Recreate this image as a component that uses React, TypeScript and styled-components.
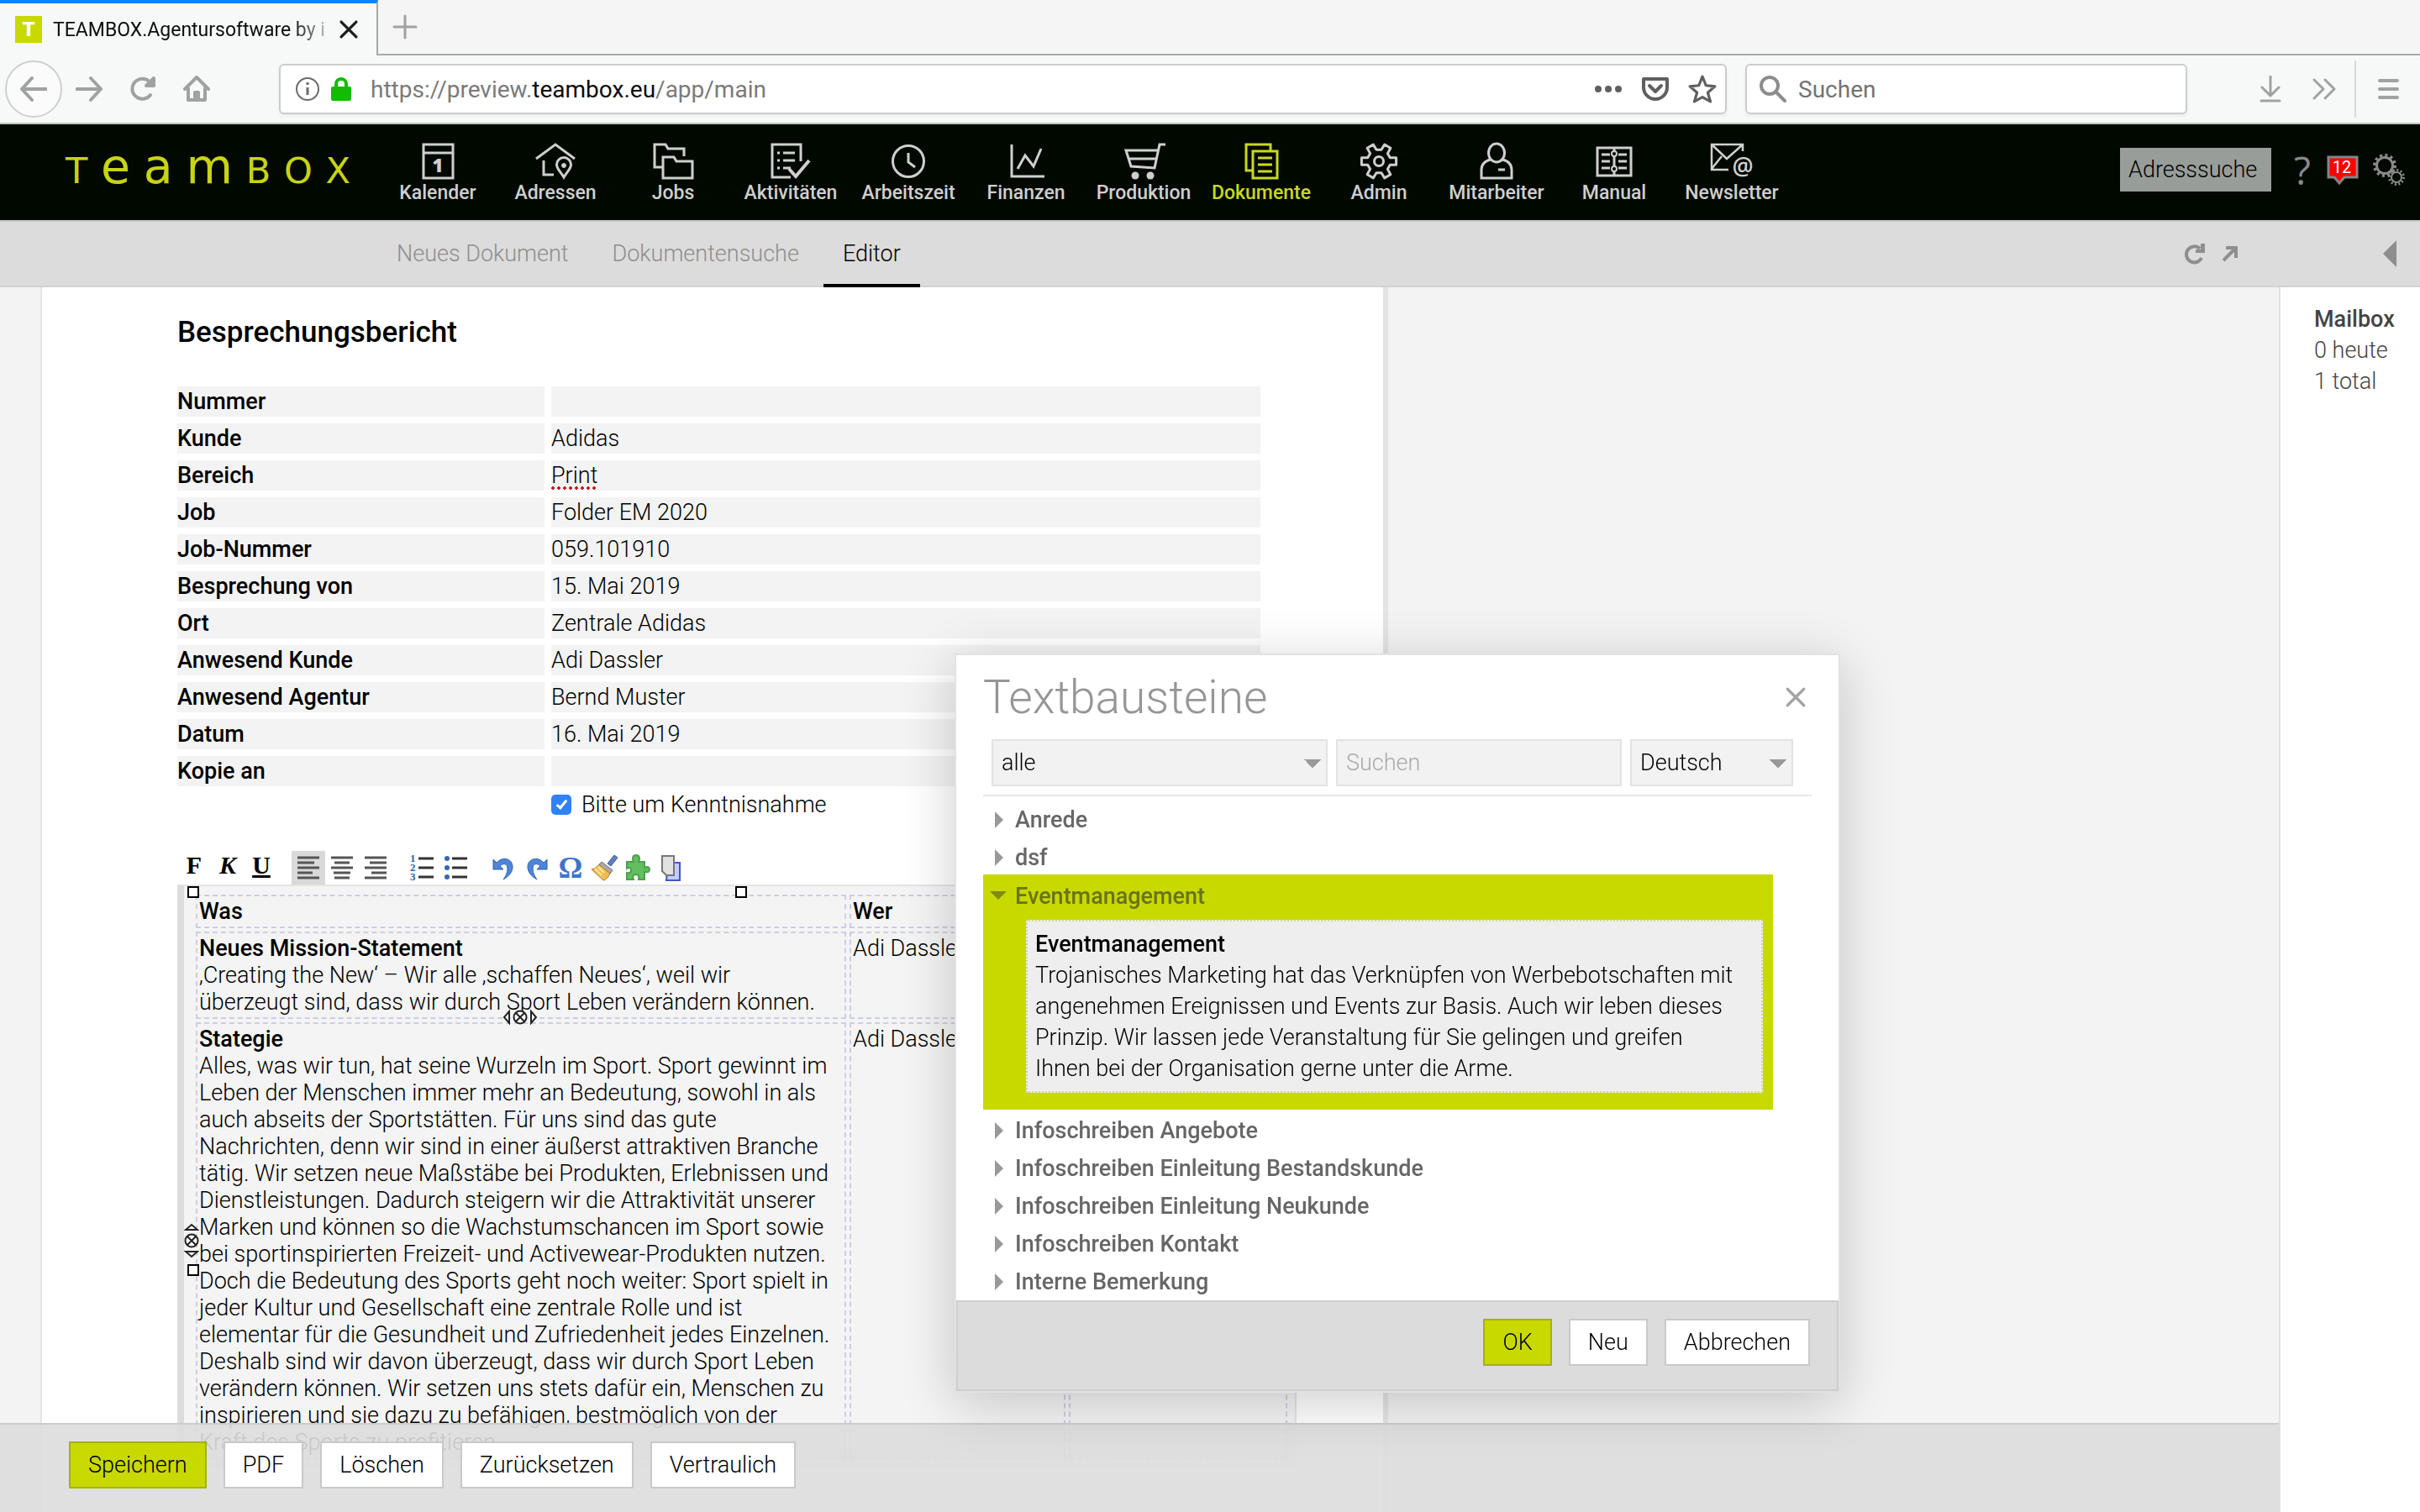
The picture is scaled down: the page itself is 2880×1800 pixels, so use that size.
import React from "react";
import styled, { createGlobalStyle, css } from "styled-components";

const lime = "#c8d900";
const sans = `Roboto, "Liberation Sans", sans-serif`;

const GlobalStyle = createGlobalStyle`
  *, *::before, *::after { box-sizing: border-box; }
  html, body, #root { height: 100%; }
  body {
    margin: 0;
    overflow: hidden;
    font-family: ${sans};
    font-size: 27px;
    font-weight: 300;
    color: #000;
    background: #f3f3f3;
  }
  button, input, select {
    margin: 0;
    border-radius: 0;
    font-family: inherit;
    font-size: inherit;
    font-weight: inherit;
    color: inherit;
  }
  svg { display: block; flex: none; }
`;

const Screen = styled.div`
  display: flex;
  flex-direction: column;
  height: 100vh;
`;

/* ---------- browser frame ---------- */

const TabStrip = styled.div`
  display: flex;
  flex: none;
  height: 66px;
  background: #f5f5f5;
`;

const BrowserTab = styled.div`
  display: flex;
  align-items: center;
  width: 450px;
  padding: 0 20px 0 18px;
  border-top: 4px solid #0a84ff;
  border-right: 2px solid #a9a9a9;
  background: #f7f9f9;
`;

const Favicon = styled.span`
  width: 32px;
  height: 32px;
  margin-right: 13px;
  background: ${lime};
  color: #fff;
  font: 900 24px/32px ${sans};
  text-align: center;
`;

const TabTitle = styled.span`
  flex: 1;
  overflow: hidden;
  white-space: nowrap;
  font-size: 23px;
  font-weight: 400;
  color: #0c0c0d;
  mask-image: linear-gradient(to right, #000 84%, transparent 100%);
`;

const StripRest = styled.div`
  display: flex;
  flex: 1;
  align-items: center;
  padding-left: 16px;
  border-bottom: 2px solid #a9a9a9;
`;

const PlainButton = styled.button`
  display: flex;
  align-items: center;
  justify-content: center;
  padding: 0;
  border: 0;
  background: none;
`;

const ChromeBar = styled.div`
  display: flex;
  flex: none;
  align-items: center;
  height: 82px;
  padding-left: 6px;
  border-bottom: 2px solid #c4c8c4;
  background: #f7f9f9;
`;

const ChromeButton = styled(PlainButton)<{ $width?: number }>`
  width: ${(p) => p.$width ?? 64}px;
  height: 68px;
`;

const BackButton = styled(PlainButton)`
  width: 68px;
  height: 68px;
  border: 2px solid #cfcfcf;
  border-radius: 50%;
  background: #fbfbfb;
`;

const fieldFrame = css`
  display: flex;
  align-items: center;
  height: 60px;
  border: 2px solid #cccccc;
  border-radius: 6px;
  background: #fff;
  box-shadow: 0 2px 4px rgba(0, 0, 0, 0.06);
`;

const AddressBar = styled.div`
  ${fieldFrame}
  flex: 1;
  gap: 12px;
  margin-left: 66px;
  padding: 0 5px 0 17px;
`;

const Url = styled.div`
  flex: 1;
  margin-left: 10px;
  font-size: 28px;
  font-weight: 400;
  color: #7a7a7a;
  white-space: nowrap;
  b { font-weight: 400; color: #0c0c0d; }
`;

const WebSearch = styled.label`
  ${fieldFrame}
  width: 526px;
  margin: 0 57px 0 22px;
  padding-left: 15px;
  gap: 14px;
`;

const WebSearchInput = styled.input`
  flex: 1;
  min-width: 0;
  padding: 0;
  border: 0;
  outline: 0;
  background: none;
  font-size: 28px;
  font-weight: 400;
  &::placeholder { color: #737373; opacity: 1; }
`;

const Divider = styled.span`
  width: 2px;
  height: 68px;
  margin-left: 14px;
  background: #d8dada;
`;

/* ---------- application header ---------- */

const Header = styled.header`
  display: flex;
  flex: none;
  height: 114px;
  padding: 0 17px 0 78px;
  background: #000800;
`;

const Logo = styled.a`
  display: flex;
  align-items: baseline;
  justify-content: space-between;
  width: 339px;
  margin-right: 34px;
  color: #c8d414;
  font: 400 43px/100px "DejaVu Sans", sans-serif;
  text-decoration: none;
`;

const LogoWide = styled.span`
  font-size: 57px;
`;

const MainNav = styled.nav`
  display: flex;
  flex: 1;
`;

const NavItem = styled.a<{ $active?: boolean }>`
  display: flex;
  flex-direction: column;
  align-items: center;
  width: 140px;
  padding-top: 20px;
  color: ${(p) => (p.$active ? "#c8d91e" : "#cfcfcf")};
  font-size: 23px;
  font-weight: 500;
  line-height: 28px;
  text-decoration: none;
`;

const HeaderTools = styled.div`
  display: flex;
  align-items: center;
  gap: 16px;
  padding-bottom: 6px;
`;

const AddressSearch = styled.input`
  width: 180px;
  height: 52px;
  margin-right: 8px;
  padding: 0 10px;
  border: 0;
  background: #999d99;
  &::placeholder { color: #000; opacity: 1; }
`;

const HelpButton = styled(PlainButton)`
  width: 26px;
  color: #8a8a8a;
  font: 400 46px/52px "Open Sans", sans-serif;
`;

const SubNav = styled.nav`
  display: flex;
  flex: none;
  height: 80px;
  padding: 0 28px 0 449px;
  border-top: 2px solid #c6c6c6;
  border-bottom: 2px solid #d2d2d2;
  background: #dcdcdc;
`;

const SubTab = styled.a<{ $active?: boolean }>`
  z-index: 1;
  height: 78px;
  margin-right: 6px;
  padding: 0 23px;
  border-bottom: 4px solid ${(p) => (p.$active ? "#000" : "transparent")};
  color: ${(p) => (p.$active ? "#000" : "#8e8e8e")};
  line-height: 76px;
  text-decoration: none;
`;

const SubTools = styled.div`
  display: flex;
  align-items: center;
  gap: 20px;
  margin-left: auto;
`;

const CollapseButton = styled(PlainButton)`
  margin-left: 153px;
`;

/* ---------- document ---------- */

const Body = styled.div`
  display: flex;
  flex: 1;
  min-height: 0;
`;

const Main = styled.main`
  position: relative;
  flex: 1;
  min-width: 0;
  overflow: hidden;
  background: #f3f3f3;
`;

const Sheet = styled.article`
  width: 1604px;
  min-height: 100%;
  margin-left: 48px;
  padding: 32px 0 0 161px;
  border: solid #e4e4e4;
  border-width: 0 6px 0 2px;
  background: #fff;
`;

const SheetTitle = styled.h1`
  margin: 0 0 42px;
  font-size: 35px;
  font-weight: 500;
  line-height: 44px;
`;

const DataTable = styled.table`
  margin: -8px 0 -8px -8px;
  border-spacing: 8px;
  th, td {
    height: 36px;
    padding: 0;
    background: #f3f3f3;
    line-height: 36px;
    text-align: left;
  }
  th { width: 437px; font-weight: 500; }
  td { width: 844px; }
`;

const Misspelled = styled.span`
  padding-bottom: 1px;
  background: radial-gradient(circle at 2px 2px, #c81e1e 1px, #c81e1e 2px, transparent 2px) left bottom / 7px 4px repeat-x;
`;

const NoticeRow = styled.label`
  display: flex;
  align-items: center;
  gap: 12px;
  width: max-content;
  height: 36px;
  margin: 4px 0 37px 445px;
`;

const Tick = styled.input`
  appearance: none;
  display: grid;
  place-items: center;
  width: 24px;
  height: 24px;
  border-radius: 5px;
  background: #fff;
  border: 2px solid #b0b0b0;
  &:checked { border: 0; background: #2f82f7; }
  &:checked::after {
    content: "";
    width: 7px;
    height: 13px;
    margin-top: -3px;
    border: solid #fff;
    border-width: 0 3px 3px 0;
    rotate: 40deg;
  }
`;

const EditorBar = styled.div`
  display: flex;
  gap: 16px;
`;

const ToolGroup = styled.div`
  display: flex;
`;

const ToolButton = styled(PlainButton)<{ $active?: boolean }>`
  width: 40px;
  height: 40px;
  background: ${(p) => (p.$active ? "#d9d9d9" : "none")};
`;

const Letter = styled.span<{ $kind?: "italic" | "underline" }>`
  padding-bottom: 6px;
  font: ${(p) => (p.$kind === "italic" ? "italic" : "normal")} 700 30px/32px "Liberation Serif", serif;
  text-decoration: ${(p) => (p.$kind === "underline" ? "underline" : "none")};
`;

const Omega = styled.span`
  color: #3f74c8;
  font: 700 36px/38px "Liberation Serif", serif;
`;

const Editor = styled.section`
  position: relative;
  width: 1332px;
  padding: 6px 0 6px 10px;
  border: solid #e4e4e4;
  border-width: 2px 2px 0 8px;
  border-left-color: #dcdcdc;
  background: #f4f4f4;
`;

const Minutes = styled.table`
  table-layout: fixed;
  width: 1307px;
  border-spacing: 4px;
  th, td {
    padding: 2px;
    border: 2px dashed #cdcde6;
    line-height: 32px;
    text-align: left;
    vertical-align: top;
    font-weight: 300;
    white-space: pre-line;
  }
  strong, th { font-weight: 500; }
  th:first-child { width: 774px; }
  th:nth-child(2) { width: 257px; }
`;

const Handle = styled.span<{ $x: number; $y: number }>`
  position: absolute;
  left: ${(p) => p.$x}px;
  top: ${(p) => p.$y}px;
  width: 14px;
  height: 14px;
  border: 2px solid #000;
  background: #fff;
`;

const MoveGrip = styled.span<{ $x: number; $y: number; $vertical?: boolean }>`
  position: absolute;
  left: ${(p) => p.$x}px;
  top: ${(p) => p.$y}px;
  rotate: ${(p) => (p.$vertical ? "90deg" : "0deg")};
`;

const ActionBar = styled.footer`
  position: absolute;
  inset: auto 0 0 0;
  display: flex;
  gap: 20px;
  height: 106px;
  padding: 20px 82px;
  border-top: 2px solid #cccccc;
  background: rgba(221, 221, 221, 0.9);
`;

const Button = styled.button<{ $primary?: boolean }>`
  height: 56px;
  padding: 0 21px;
  border: 2px solid ${(p) => (p.$primary ? "#a5b10f" : "#c9c9c9")};
  background: ${(p) => (p.$primary ? lime : "#fff")};
  white-space: nowrap;
`;

const Mailbox = styled.aside`
  flex: none;
  width: 168px;
  padding: 20px 0 0 40px;
  border-left: 2px solid #e0e0e0;
  background: #fff;
  color: #444;
  line-height: 37px;
  h2, p { margin: 0; font-size: inherit; font-weight: inherit; }
  h2 { font-weight: 500; }
`;

/* ---------- dialog ---------- */

const Dialog = styled.section`
  position: fixed;
  left: 1136px;
  top: 778px;
  z-index: 2;
  width: 1054px;
  border: 2px solid #e2e2e2;
  background: #fff;
  box-shadow: 0 12px 60px rgba(0, 0, 0, 0.2);
`;

const DialogHead = styled.div`
  display: flex;
  align-items: center;
  justify-content: space-between;
  height: 100px;
  padding: 0 38px 0 32px;
  h2 { margin: 0; color: #969696; font-size: 55px; font-weight: 300; }
`;

const Filters = styled.div`
  display: flex;
  gap: 10px;
  margin: 0 32px;
  padding: 0 20px 10px 10px;
  border-bottom: 2px solid #e8e8e8;
`;

const filterField = css`
  height: 56px;
  padding: 0 10px;
  border: 2px solid #e2e2e2;
  outline: 0;
`;

const FilterSelect = styled.select<{ $width: number }>`
  ${filterField}
  appearance: none;
  width: ${(p) => p.$width}px;
  background:
    linear-gradient(to bottom right, #999 50%, transparent 50%) right 6px top 22px / 10px 10px no-repeat,
    linear-gradient(to bottom left, #999 50%, transparent 50%) right 16px top 22px / 10px 10px no-repeat,
    #f2f2f2;
`;

const FilterInput = styled.input`
  ${filterField}
  width: 340px;
  background: #f2f2f2;
  &::placeholder { color: #a9a9a9; opacity: 1; }
`;

const SnippetList = styled.ul`
  margin: 0;
  padding: 3px 0 2px 32px;
  list-style: none;
`;

const SnippetGroup = styled.li<{ $open?: boolean }>`
  width: 940px;
  ${(p) => p.$open && css`padding: 1px 12px 20px 0; background: ${lime};`}
`;

const GroupButton = styled(PlainButton)<{ $open?: boolean }>`
  gap: 10px;
  height: 45px;
  padding: 5px 0 0 8px;
  color: ${(p) => (p.$open ? "#6a7218" : "#666")};
  font-weight: 500;
`;

const Snippet = styled.div`
  margin: 8px 0 0 51px;
  padding: 9px 8px 8px 9px;
  border: 2px dotted #d2da86;
  background: #eeeeee;
  line-height: 37px;
  white-space: pre-line;
  strong { display: block; font-weight: 500; }
  p { margin: 0; }
`;

const DialogFoot = styled.div`
  display: flex;
  justify-content: flex-end;
  gap: 20px;
  height: 108px;
  padding: 20px 32px 0;
  border: 2px solid #cecece;
  background: #dcdcdc;
`;

/* ---------- icons ---------- */

const gear = (cx: number, cy: number, teeth: number, outer: number, inner: number, start = 0) => {
  const step = (Math.PI * 2) / teeth;
  const points: string[] = [];
  for (let i = 0; i < teeth; i++) {
    const a = start + i * step;
    [[-0.3, inner], [-0.19, outer], [0.19, outer], [0.3, inner]].forEach(([o, r]) =>
      points.push(`${(cx + Math.cos(a + o * step) * r).toFixed(2)} ${(cy + Math.sin(a + o * step) * r).toFixed(2)}`)
    );
  }
  return `M${points.join("L")}Z`;
};

const NavIcon = ({ children }: { children: React.ReactNode }) => (
  <svg width="56" height="48" viewBox="-4 0 56 48" fill="none" stroke="currentColor" strokeWidth="3" aria-hidden="true">
    {children}
  </svg>
);

const navItems: { label: string; active?: boolean; icon: React.ReactNode }[] = [
  {
    label: "Kalender",
    icon: (
      <>
        <path d="M7 4H42V44H7ZM7 14H42" />
        <text x="24" y="37" textAnchor="middle" fontFamily="Open Sans" fontWeight="800" fontSize="22" fill="currentColor" stroke="none">1</text>
      </>
    ),
  },
  {
    label: "Adressen",
    icon: (
      <>
        <path d="M1 21L24 4L47 21M10 23V40H22" />
        <path d="M34 43C30 36 25.500 33 25.500 28A8.500 8.500 0 0 1 42.500 28C42.500 33 38 36 34 43Z" />
        <circle cx="34" cy="29" r="2.500" fill="currentColor" strokeWidth="1" />
      </>
    ),
  },
  {
    label: "Jobs",
    icon: <path d="M11 31H2V4H15L18 9H37V18M12 44V19H25L28 24H47V44Z" />,
  },
  {
    label: "Aktivitäten",
    icon: (
      <>
        <path d="M24 43H2V4H36V24" />
        <path d="M8 14H11M15 14H29M8 23H11M15 23H29M8 32H11M15 32H24" />
        <path d="M22 33L30 42L46 23" strokeWidth="4" />
      </>
    ),
  },
  {
    label: "Arbeitszeit",
    icon: (
      <>
        <circle cx="24" cy="24" r="18.500" />
        <path d="M24 14V25L32 31" />
      </>
    ),
  },
  { label: "Finanzen", icon: <path d="M7 4V42H46M14 33L23 17L33 30L42 9" /> },
  {
    label: "Produktion",
    icon: (
      <>
        <path d="M50 4H43L37 32L9 30L3 11H41M6 21H39" />
        <circle cx="14" cy="41" r="4.500" fill="currentColor" stroke="none" />
        <circle cx="32" cy="41" r="4.500" fill="currentColor" stroke="none" />
      </>
    ),
  },
  {
    label: "Dokumente",
    active: true,
    icon: <path d="M14 35H6V4H35V12M14 12H43V44H14ZM20 20H37M20 28H37M20 36H37" />,
  },
  {
    label: "Admin",
    icon: (
      <>
        <path d={gear(24, 24, 6, 21, 14)} strokeLinejoin="round" />
        <circle cx="24" cy="24" r="5.500" />
      </>
    ),
  },
  {
    label: "Mitarbeiter",
    icon: (
      <>
        <ellipse cx="24" cy="14" rx="9.500" ry="11" />
        <path d="M17 22C9 24 6 28 6 34V44H42V34C42 28 39 24 31 22M26 34H34" />
      </>
    ),
  },
  {
    label: "Manual",
    icon: (
      <>
        <path d="M4 8H44V41H4ZM24 8V41M9 16H19M9 24H19M9 32H19M29 16H39M29 24H39M29 32H39" />
        <circle cx="24" cy="15" r="3" fill="#000800" strokeWidth="2" />
        <circle cx="24" cy="33" r="3" fill="#000800" strokeWidth="2" />
      </>
    ),
  },
  {
    label: "Newsletter",
    icon: (
      <>
        <path d="M20 34H0V4H37V12M0 4L18 21L37 4M0 33L12 18" strokeWidth="2.500" />
        <text x="37" y="40" textAnchor="middle" fontFamily="Open Sans" fontWeight="600" fontSize="28" fill="currentColor" stroke="none">@</text>
      </>
    ),
  },
];

const Stroke = ({ d, size = 32, width = 4, color = "#a0a2a2", fill = "none" }: { d: string; size?: number; width?: number; color?: string; fill?: string }) => (
  <svg width={size} height={size} viewBox="0 0 32 32" fill={fill} stroke={color} strokeWidth={width} strokeLinecap="round" strokeLinejoin="round" aria-hidden="true">
    <path d={d} />
  </svg>
);

const Lines = ({ rows }: { rows: [number, number][] }) => (
  <svg width="26" height="28" viewBox="0 0 26 28" stroke="#555" strokeWidth="3" aria-hidden="true">
    {rows.map(([a, b], i) => (
      <path key={i} d={`M${a} ${2 + i * 6}H${b}`} />
    ))}
  </svg>
);

const ListGlyph = ({ numbered }: { numbered?: boolean }) => (
  <svg width="30" height="36" viewBox="0 0 30 36" aria-hidden="true">
    <path d="M10 7H28M10 18H28M10 29H28" stroke="#333" strokeWidth="3" />
    {[7, 18, 29].map((y, i) =>
      numbered ? (
        <text key={y} x="0" y={y + 4} fontSize="13" fontWeight="700" fontFamily="Liberation Serif" fill="#2f62ae">{i + 1}</text>
      ) : (
        <circle key={y} cx="4" cy={y} r="3" fill="#3568b4" />
      )
    )}
  </svg>
);

const Turn = ({ flip }: { flip?: boolean }) => (
  <svg width="28" height="30" viewBox="0 0 28 30" aria-hidden="true">
    <g transform={flip ? "matrix(-1 0 0 1 28 0)" : undefined}>
      <path d="M2 5V17H14L10 13C14 9 19 10 19 16C19 21 17 25 14 29C21 25 25 20 25 14C25 4 13 1 6 9Z" fill="#4d86d8" stroke="#2f62ae" />
    </g>
  </svg>
);

const Brush = () => (
  <svg width="34" height="32" viewBox="0 0 34 32" aria-hidden="true">
    <path d="M21 11L29 1L33 4L25 14Z" fill="#5f7fbd" stroke="#3f5a94" />
    <path d="M14 9L27 19L24 23L11 12Z" fill="#a9a9ae" stroke="#6e6e74" />
    <path d="M11 12L24 23C21 29 18 31 16 31L2 18C6 17 9 15 11 12Z" fill="#efbd4e" stroke="#a9793a" />
    <path d="M6 17L14 25M10 15L17 22" stroke="#fbe6a6" strokeWidth="2" />
  </svg>
);

const Puzzle = () => (
  <svg width="30" height="32" viewBox="0 0 30 32" aria-hidden="true">
    <path d="M2 9H10C8 5 9 1 13 1C17 1 18 5 16 9H23V16C27 14 29 15 29 18C29 21 27 22 23 21V30H16C17 26 15 24 13 24C10 24 8 26 10 30H2V22C6 23 7 21 7 19C7 16 5 15 2 17Z" fill="#62bf5e" stroke="#4da04e" strokeWidth="2" />
  </svg>
);

const Copies = () => (
  <svg width="26" height="32" viewBox="0 0 26 32" aria-hidden="true">
    <path d="M9 10H23V31H7Z" fill="#c3cdf8" stroke="#4558b8" strokeWidth="2" />
    <path d="M2 2H16V25H7L2 20Z" fill="#e2e2e2" stroke="#777" strokeWidth="2" />
  </svg>
);

const Caret = ({ open }: { open?: boolean }) => (
  <svg width="20" height="20" viewBox="0 0 20 20" aria-hidden="true">
    {open ? <path d="M0 4H20L10 14Z" fill="#7f8a10" /> : <path d="M6 0L16 10L6 20Z" fill="#999" />}
  </svg>
);

const GripIcon = () => (
  <svg width="42" height="18" viewBox="0 0 42 18" fill="none" stroke="#222" strokeWidth="2" aria-hidden="true">
    <path d="M8 2V16L2 9ZM34 2V16L40 9Z" fill="#fff" />
    <circle cx="21" cy="9" r="7.500" fill="#fff" />
    <path d="M16 4L26 14M26 4L16 14" />
  </svg>
);

/* ---------- content ---------- */

const facts: [string, React.ReactNode][] = [
  ["Nummer", ""],
  ["Kunde", "Adidas"],
  ["Bereich", <Misspelled key="print">Print</Misspelled>],
  ["Job", "Folder EM 2020"],
  ["Job-Nummer", "059.101910"],
  ["Besprechung von", "15. Mai 2019"],
  ["Ort", "Zentrale Adidas"],
  ["Anwesend Kunde", "Adi Dassler"],
  ["Anwesend Agentur", "Bernd Muster"],
  ["Datum", "16. Mai 2019"],
  ["Kopie an", ""],
];

const mission = `‚Creating the New‘ – Wir alle ‚schaffen Neues‘, weil wir
überzeugt sind, dass wir durch Sport Leben verändern können.`;

const strategy = `Alles, was wir tun, hat seine Wurzeln im Sport. Sport gewinnt im
Leben der Menschen immer mehr an Bedeutung, sowohl in als
auch abseits der Sportstätten. Für uns sind das gute
Nachrichten, denn wir sind in einer äußerst attraktiven Branche
tätig. Wir setzen neue Maßstäbe bei Produkten, Erlebnissen und
Dienstleistungen. Dadurch steigern wir die Attraktivität unserer
Marken und können so die Wachstumschancen im Sport sowie
bei sportinspirierten Freizeit- und Activewear-Produkten nutzen.
Doch die Bedeutung des Sports geht noch weiter: Sport spielt in
jeder Kultur und Gesellschaft eine zentrale Rolle und ist
elementar für die Gesundheit und Zufriedenheit jedes Einzelnen.
Deshalb sind wir davon überzeugt, dass wir durch Sport Leben
verändern können. Wir setzen uns stets dafür ein, Menschen zu
inspirieren und sie dazu zu befähigen, bestmöglich von der
Kraft des Sports zu profitieren.`;

const snippet = `Trojanisches Marketing hat das Verknüpfen von Werbebotschaften mit
angenehmen Ereignissen und Events zur Basis. Auch wir leben dieses
Prinzip. Wir lassen jede Veranstaltung für Sie gelingen und greifen
Ihnen bei der Organisation gerne unter die Arme.`;

const groups = [
  "Anrede",
  "dsf",
  "Eventmanagement",
  "Infoschreiben Angebote",
  "Infoschreiben Einleitung Bestandskunde",
  "Infoschreiben Einleitung Neukunde",
  "Infoschreiben Kontakt",
  "Interne Bemerkung",
];

const BrowserFrame = () => (
  <>
    <TabStrip>
      <BrowserTab>
        <Favicon>T</Favicon>
        <TabTitle>TEAMBOX.Agentursoftware by i</TabTitle>
        <PlainButton aria-label="Tab schließen">
          <Stroke d="M5 5L27 27M27 5L5 27" size={26} width={4} color="#1c1c1e" />
        </PlainButton>
      </BrowserTab>
      <StripRest>
        <PlainButton aria-label="Neuer Tab">
          <Stroke d="M16 3V29M3 16H29" width={3} />
        </PlainButton>
      </StripRest>
    </TabStrip>
    <ChromeBar>
      <BackButton aria-label="Zurück">
        <Stroke d="M31 16H2M14 3L2 16L14 29" />
      </BackButton>
      <ChromeButton aria-label="Vor">
        <Stroke d="M1 16H30M18 3L30 16L18 29" />
      </ChromeButton>
      <ChromeButton aria-label="Neu laden">
        <Stroke d="M25 23A12 12 0 1 1 26 10M29 3V12H20Z" />
      </ChromeButton>
      <ChromeButton aria-label="Startseite">
        <Stroke d="M2 16L16 2L30 16M6 15V29H26V15M14 29V20H18V29" />
      </ChromeButton>
      <AddressBar>
        <svg width="30" height="30" viewBox="0 0 30 30" fill="none" stroke="#6b6b6b" strokeWidth="2" aria-hidden="true">
          <circle cx="15" cy="15" r="13" />
          <path d="M15 13V22M15 7V10" strokeWidth="3" />
        </svg>
        <svg width="26" height="30" viewBox="0 0 26 30" aria-hidden="true">
          <path d="M7 14V9A6 6 0 0 1 19 9V14" fill="none" stroke="#12bc00" strokeWidth="4" />
          <rect x="1" y="12" width="24" height="17" rx="2" fill="#12bc00" />
        </svg>
        <Url role="textbox" aria-label="Adresse">
          https://preview.<b>teambox.eu</b>/app/main
        </Url>
        <ChromeButton $width={44} aria-label="Seitenaktionen">
          <svg width="32" height="10" viewBox="0 0 32 10" fill="#5f5f5f"><circle cx="4" cy="5" r="4" /><circle cx="16" cy="5" r="4" /><circle cx="28" cy="5" r="4" /></svg>
        </ChromeButton>
        <ChromeButton $width={44} aria-label="Pocket">
          <Stroke d="M2 4H30V14A14 14 0 0 1 2 14ZM9 12L16 19L23 12" color="#5f5f5f" />
        </ChromeButton>
        <ChromeButton $width={44} aria-label="Lesezeichen">
          <Stroke d="M16 2L20 12L30 13L22 20L25 30L16 25L7 30L10 20L2 13L12 12Z" color="#5f5f5f" width={3} size={34} />
        </ChromeButton>
      </AddressBar>
      <WebSearch aria-label="Suchen">
        <Stroke d="M12 2A9 9 0 1 0 12 22A9 9 0 1 0 12 2M19 19L30 30" color="#8c8c8c" />
        <WebSearchInput placeholder="Suchen" />
      </WebSearch>
      <ChromeButton $width={84} aria-label="Downloads">
        <Stroke d="M16 1V24M6 14L16 24L26 14M5 30H27" width={3} />
      </ChromeButton>
      <ChromeButton $width={44} aria-label="Mehr Werkzeuge">
        <Stroke d="M4 5L15 16L4 27M17 5L28 16L17 27" width={3} />
      </ChromeButton>
      <Divider />
      <ChromeButton $width={76} aria-label="Menü">
        <Stroke d="M6 6H27M6 16H27M6 26H27" />
      </ChromeButton>
    </ChromeBar>
  </>
);

const AppHeader = () => (
  <>
    <Header>
      <Logo href="#start" aria-label="TeamBOX">
        <span>T</span>
        <LogoWide>e</LogoWide>
        <LogoWide>a</LogoWide>
        <LogoWide>m</LogoWide>
        <span>B</span>
        <span>O</span>
        <span>X</span>
      </Logo>
      <MainNav>
        {navItems.map((item) => (
          <NavItem key={item.label} href={`#${item.label}`} $active={item.active}>
            <NavIcon>{item.icon}</NavIcon>
            {item.label}
          </NavItem>
        ))}
      </MainNav>
      <HeaderTools>
        <AddressSearch placeholder="Adresssuche" aria-label="Adresssuche" />
        <HelpButton aria-label="Hilfe">?</HelpButton>
        <PlainButton aria-label="12 Meldungen">
          <svg width="38" height="38" viewBox="0 0 38 38">
            <path d="M2 4H36V28H21L15 35L9 28H2Z" fill="#f00" stroke="#858585" strokeWidth="3" />
            <text x="18" y="23" textAnchor="middle" fontFamily="Roboto" fontWeight="400" fontSize="20" fill="#fff">12</text>
          </svg>
        </PlainButton>
        <PlainButton aria-label="Einstellungen">
          <svg width="40" height="40" viewBox="0 0 40 40" fill="none" stroke="#8a8a8a">
            <circle cx="15" cy="15" r="9.500" strokeWidth="3" />
            <circle cx="15" cy="15" r="12" strokeWidth="4" strokeDasharray="3 3.280" />
            <circle cx="29" cy="29" r="6" strokeWidth="2" />
            <circle cx="29" cy="29" r="8.500" strokeWidth="3" strokeDasharray="2 2.450" />
          </svg>
        </PlainButton>
      </HeaderTools>
    </Header>
    <SubNav>
      <SubTab href="#neu">Neues Dokument</SubTab>
      <SubTab href="#suche">Dokumentensuche</SubTab>
      <SubTab href="#editor" $active>Editor</SubTab>
      <SubTools>
        <PlainButton aria-label="Aktualisieren">
          <svg width="26" height="26" viewBox="0 0 26 26">
            <path d="M21 18A9.500 9.500 0 1 1 19 7" fill="none" stroke="#8e8e8e" strokeWidth="4" />
            <path d="M25 1V12H14V8H20V1Z" fill="#8e8e8e" />
          </svg>
        </PlainButton>
        <PlainButton aria-label="In neuem Fenster öffnen">
          <svg width="18" height="20" viewBox="0 0 18 20" fill="none" stroke="#8e8e8e" strokeWidth="4">
            <path d="M1 18L15 4M4 3H16V15" />
          </svg>
        </PlainButton>
        <CollapseButton aria-label="Seitenleiste einklappen">
          <svg width="16" height="32" viewBox="0 0 16 32"><path d="M16 0V32L0 16Z" fill="#8e8e8e" /></svg>
        </CollapseButton>
      </SubTools>
    </SubNav>
  </>
);

const Report = () => (
  <Sheet>
    <SheetTitle>Besprechungsbericht</SheetTitle>
    <DataTable>
      <tbody>
        {facts.map(([label, value]) => (
          <tr key={label}>
            <th scope="row">{label}</th>
            <td>{value}</td>
          </tr>
        ))}
      </tbody>
    </DataTable>
    <NoticeRow>
      <Tick type="checkbox" defaultChecked />
      Bitte um Kenntnisnahme
    </NoticeRow>
    <EditorBar>
      <ToolGroup>
        <ToolButton aria-label="Fett"><Letter>F</Letter></ToolButton>
        <ToolButton aria-label="Kursiv"><Letter $kind="italic">K</Letter></ToolButton>
        <ToolButton aria-label="Unterstrichen"><Letter $kind="underline">U</Letter></ToolButton>
      </ToolGroup>
      <ToolGroup>
        <ToolButton $active aria-label="Linksbündig"><Lines rows={[[0, 26], [0, 20], [0, 26], [0, 18], [0, 26]]} /></ToolButton>
        <ToolButton aria-label="Zentriert"><Lines rows={[[0, 26], [4, 22], [0, 26], [3, 23], [4, 22]]} /></ToolButton>
        <ToolButton aria-label="Rechtsbündig"><Lines rows={[[0, 26], [6, 26], [0, 26], [8, 26], [0, 26]]} /></ToolButton>
      </ToolGroup>
      <ToolGroup>
        <ToolButton aria-label="Nummerierte Liste"><ListGlyph numbered /></ToolButton>
        <ToolButton aria-label="Aufzählung"><ListGlyph /></ToolButton>
      </ToolGroup>
      <ToolGroup>
        <ToolButton aria-label="Rückgängig"><Turn /></ToolButton>
        <ToolButton aria-label="Wiederholen"><Turn flip /></ToolButton>
        <ToolButton aria-label="Sonderzeichen"><Omega>Ω</Omega></ToolButton>
        <ToolButton aria-label="Formatierung entfernen"><Brush /></ToolButton>
        <ToolButton aria-label="Textbausteine"><Puzzle /></ToolButton>
        <ToolButton aria-label="Kopieren"><Copies /></ToolButton>
      </ToolGroup>
    </EditorBar>
    <Editor>
      <Minutes>
        <thead>
          <tr>
            <th scope="col">Was</th>
            <th scope="col">Wer</th>
            <th scope="col" />
          </tr>
        </thead>
        <tbody>
          <tr>
            <td><strong>Neues Mission-Statement</strong>{"\n" + mission}</td>
            <td>Adi Dassler</td>
            <td />
          </tr>
          <tr>
            <td><strong>Stategie</strong>{"\n" + strategy}</td>
            <td>Adi Dassler</td>
            <td />
          </tr>
        </tbody>
      </Minutes>
      <Handle $x={4} $y={0} />
      <Handle $x={656} $y={0} />
      <Handle $x={4} $y={450} />
      <MoveGrip $x={379} $y={147}><GripIcon /></MoveGrip>
      <MoveGrip $x={-12} $y={413} $vertical><GripIcon /></MoveGrip>
    </Editor>
  </Sheet>
);

const Textbausteine = () => (
  <Dialog role="dialog" aria-labelledby="dialog-title">
    <DialogHead>
      <h2 id="dialog-title">Textbausteine</h2>
      <PlainButton aria-label="Schließen">
        <Stroke d="M4 4L28 28M28 4L4 28" size={26} color="#a3a3a3" />
      </PlainButton>
    </DialogHead>
    <Filters>
      <FilterSelect $width={400} aria-label="Kategorie"><option>alle</option></FilterSelect>
      <FilterInput placeholder="Suchen" aria-label="Suchen" />
      <FilterSelect $width={194} aria-label="Sprache"><option>Deutsch</option></FilterSelect>
    </Filters>
    <SnippetList>
      {groups.map((name) => {
        const open = name === "Eventmanagement";
        return (
          <SnippetGroup key={name} $open={open}>
            <GroupButton $open={open} aria-expanded={open}>
              <Caret open={open} />
              {name}
            </GroupButton>
            {open && (
              <Snippet>
                <strong>{name}</strong>
                <p>{snippet}</p>
              </Snippet>
            )}
          </SnippetGroup>
        );
      })}
    </SnippetList>
    <DialogFoot>
      <Button $primary>OK</Button>
      <Button>Neu</Button>
      <Button>Abbrechen</Button>
    </DialogFoot>
  </Dialog>
);

export default function App() {
  return (
    <Screen>
      <GlobalStyle />
      <BrowserFrame />
      <AppHeader />
      <Body>
        <Main>
          <Report />
          <ActionBar>
            <Button $primary>Speichern</Button>
            <Button>PDF</Button>
            <Button>Löschen</Button>
            <Button>Zurücksetzen</Button>
            <Button>Vertraulich</Button>
          </ActionBar>
        </Main>
        <Mailbox>
          <h2>Mailbox</h2>
          <p>0 heute</p>
          <p>1 total</p>
        </Mailbox>
      </Body>
      <Textbausteine />
    </Screen>
  );
}
